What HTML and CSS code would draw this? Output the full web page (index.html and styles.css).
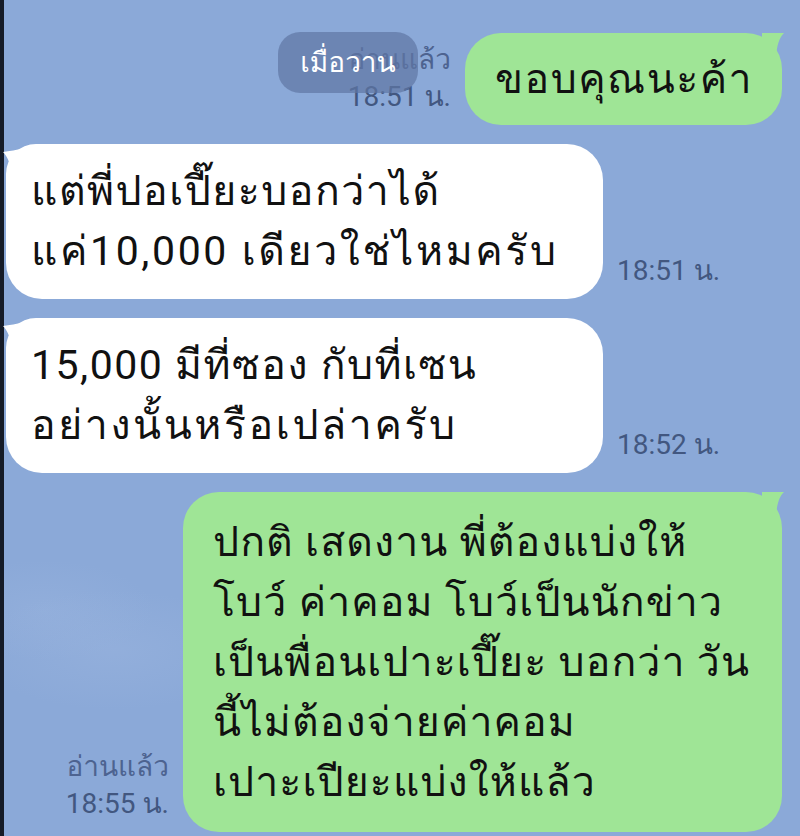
FILE: index.html
```html
<!DOCTYPE html>
<html lang="th">
<head>
<meta charset="utf-8">
<title>LINE chat</title>
<link rel="stylesheet" href="styles.css">
</head>
<body>
<div class="screen">
  <div class="chat">
    <div class="row sent">
      <div class="meta"><span class="read">อ่านแล้ว</span><span class="time">18:51 น.</span></div>
      <div class="bubble green b-short">ขอบคุณนะค้า</div>
    </div>
    <div class="row recv">
      <div class="bubble white b-wide">แต่พี่ปอเปี๊ยะบอกว่าได้<br><span class="wide">แค่10,000 เดียวใช่ไหมครับ</span></div>
      <div class="meta"><span class="time">18:51 น.</span></div>
    </div>
    <div class="row recv">
      <div class="bubble white b-wide">15,000 มีที่ซอง กับที่เซน<br><span class="wide">อย่างนั้นหรือเปล่าครับ</span></div>
      <div class="meta"><span class="time">18:52 น.</span></div>
    </div>
    <div class="row sent">
      <div class="meta"><span class="read">อ่านแล้ว</span><span class="time">18:55 น.</span></div>
      <div class="bubble green b-long">ปกติ เสดงาน พี่ต้องแบ่งให้<br>โบว์ ค่าคอม โบว์เป็นนักข่าว<br>เป็นพื่อนเปาะเปี๊ยะ บอกว่า วัน<br>นี้ไม่ต้องจ่ายค่าคอม<br>เปาะเปียะแบ่งให้แล้ว</div>
    </div>
  </div>
  <div class="date-pill">เมื่อวาน</div>
</div>
</body>
</html>
```
FILE: styles.css
```css
* { box-sizing: border-box; }
html, body { margin: 0; padding: 0; }
body {
  width: 800px;
  height: 836px;
  overflow: hidden;
  background: #8ba9d8;
  font-family: "Roboto", "Loma", "Noto Sans Thai Looped", sans-serif;
}
.screen {
  position: relative;
  height: 836px;
  border-left: 4px solid #151b27;
  background:
    radial-gradient(ellipse 140px 60px at 110px 650px, rgba(160, 185, 225, 0.35), rgba(160, 185, 225, 0) 100%),
    radial-gradient(ellipse 110px 50px at 40px 610px, rgba(160, 185, 225, 0.3), rgba(160, 185, 225, 0) 100%),
    #8ba9d8;
}
.chat {
  display: flex;
  flex-direction: column;
  gap: 19px;
  padding: 33px 18px 0 2px;
}
.row {
  display: flex;
  align-items: flex-end;
  gap: 14px;
}
.row.sent { justify-content: flex-end; }
.row.recv { justify-content: flex-start; }
.bubble {
  position: relative;
  font-size: 41px;
  line-height: 60px;
  letter-spacing: 1.5px;
  color: #111;
  border-radius: 36px;
  padding: 16px 25px;
  white-space: nowrap;
}
.bubble .wide { letter-spacing: 2.6px; }
.bubble.white { background: #fff; border-top-left-radius: 30px; }
.bubble.green { background: #9fe596; }
.b-short { width: 317px; padding-left: 30px; }
.b-wide { width: 597px; padding-top: 17px; padding-bottom: 18px; }
.b-long { width: 599px; padding: 20px 28px 20px 30px; letter-spacing: 1.1px; }
.bubble.green::after {
  content: "";
  position: absolute;
  top: 0;
  right: -2px;
  width: 22px;
  height: 24px;
  background: #9fe596;
  clip-path: path("M0 0 L22 0 C17 5 15 12 14 24 L0 24 Z");
}
.bubble.white::before {
  content: "";
  position: absolute;
  top: 4px;
  left: -3px;
  width: 22px;
  height: 24px;
  background: #fff;
  clip-path: path("M22 0 L22 24 L8 24 C7 14 4 8 0 4 C6 3 14 2 22 0 Z");
}
.meta {
  display: flex;
  flex-direction: column;
  align-items: flex-end;
  font-size: 28px;
  line-height: 37px;
  color: #425780;
  margin-bottom: 10px;
}
.row.recv .meta { align-items: flex-start; }
.read { color: #4d6390; }
.date-pill {
  position: absolute;
  top: 32px;
  left: 274px;
  width: 140px;
  height: 61px;
  border-radius: 22px;
  background: rgba(96, 118, 164, 0.7);
  color: #fff;
  font-size: 28px;
  font-weight: 500;
  line-height: 61px;
  text-align: center;
}
```
